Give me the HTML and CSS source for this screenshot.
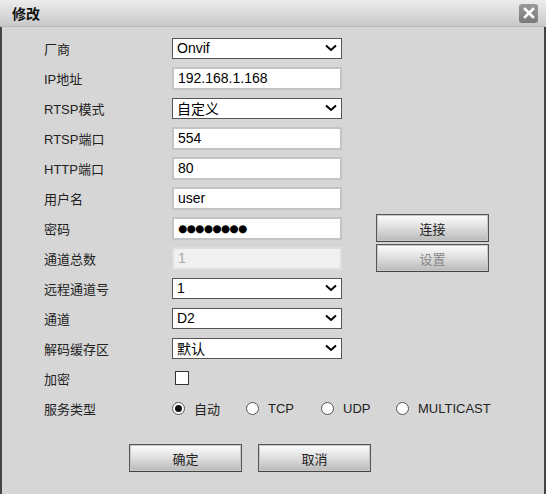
FILE: index.html
```html
<!DOCTYPE html>
<html lang="zh-CN">
<head>
<meta charset="utf-8">
<title>修改</title>
<link rel="stylesheet" href="styles.css">
</head>
<body>
<div class="dialog">
  <div class="titlebar">
    <span class="title">修改</span>
    <span class="close"><svg width="12" height="12" viewBox="0 0 12 12"><path d="M2 2 L10 10 M10 2 L2 10" stroke="#fff" stroke-width="2.6" stroke-linecap="square"/></svg></span>
  </div>
  <div class="body">
    <div class="form">
      <div class="label">厂商</div>
      <div class="select"><span>Onvif</span><svg class="chev" width="12" height="8" viewBox="0 0 12 8"><path d="M1 1.5 L6 6 L11 1.5" fill="none" stroke="#000" stroke-width="2"/></svg></div>
      <div class="side"></div>

      <div class="label">IP地址</div>
      <div class="input">192.168.1.168</div>
      <div class="side"></div>

      <div class="label">RTSP模式</div>
      <div class="select"><span>自定义</span><svg class="chev" width="12" height="8" viewBox="0 0 12 8"><path d="M1 1.5 L6 6 L11 1.5" fill="none" stroke="#000" stroke-width="2"/></svg></div>
      <div class="side"></div>

      <div class="label">RTSP端口</div>
      <div class="input">554</div>
      <div class="side"></div>

      <div class="label">HTTP端口</div>
      <div class="input">80</div>
      <div class="side"></div>

      <div class="label">用户名</div>
      <div class="input">user</div>
      <div class="side"></div>

      <div class="label">密码</div>
      <div class="input pwd">●●●●●●●●</div>
      <div class="side"><div class="btn side-btn">连接</div></div>

      <div class="label">通道总数</div>
      <div class="input disabled">1</div>
      <div class="side"><div class="btn side-btn dim">设置</div></div>

      <div class="label">远程通道号</div>
      <div class="select"><span>1</span><svg class="chev" width="12" height="8" viewBox="0 0 12 8"><path d="M1 1.5 L6 6 L11 1.5" fill="none" stroke="#000" stroke-width="2"/></svg></div>
      <div class="side"></div>

      <div class="label">通道</div>
      <div class="select"><span>D2</span><svg class="chev" width="12" height="8" viewBox="0 0 12 8"><path d="M1 1.5 L6 6 L11 1.5" fill="none" stroke="#000" stroke-width="2"/></svg></div>
      <div class="side"></div>

      <div class="label">解码缓存区</div>
      <div class="select"><span>默认</span><svg class="chev" width="12" height="8" viewBox="0 0 12 8"><path d="M1 1.5 L6 6 L11 1.5" fill="none" stroke="#000" stroke-width="2"/></svg></div>
      <div class="side"></div>

      <div class="label">加密</div>
      <div class="check-cell"><span class="checkbox"></span></div>
      <div class="side"></div>

      <div class="label">服务类型</div>
      <div class="radios">
        <span class="radio-item"><span class="radio on"></span>自动</span>
        <span class="radio-item"><span class="radio"></span>TCP</span>
        <span class="radio-item"><span class="radio"></span>UDP</span>
        <span class="radio-item"><span class="radio"></span>MULTICAST</span>
      </div>
    </div>
    <div class="actions">
      <div class="btn big">确定</div>
      <div class="btn big">取消</div>
    </div>
  </div>
</div>
</body>
</html>
```
FILE: styles.css
```css
* { box-sizing: border-box; }
html, body { margin: 0; padding: 0; }
body {
  width: 546px;
  height: 494px;
  overflow: hidden;
  background: #d6d6d6;
  font-family: "Liberation Sans", Arial, "Noto Sans CJK SC", sans-serif;
  color: #222;
}
.dialog {
  width: 546px;
  height: 494px;
  display: flex;
  flex-direction: column;
}
.titlebar {
  height: 27px;
  flex: none;
  display: flex;
  align-items: center;
  justify-content: space-between;
  padding: 0 8px 0 12px;
  background: linear-gradient(#ededed, #c9c9c9);
  border-bottom: 1px solid #b8b8b8;
}
.title {
  font-size: 14px;
  font-weight: bold;
  color: #111;
}
.close {
  width: 19px;
  height: 19px;
  border-radius: 3px;
  background: linear-gradient(#9a9a9a, #7a7a7a);
  display: flex;
  align-items: center;
  justify-content: center;
}
.body {
  flex: 1;
  border-left: 2px solid #444;
  border-right: 2px solid #444;
  background: #d6d6d6;
  padding: 6px 0 0 42px;
}
.form {
  display: grid;
  grid-template-columns: 128px 170px 113px;
  grid-auto-rows: 30px;
  align-items: center;
}
.form .side { padding-left: 34px; }
.radios { grid-column: 2 / 4; }
.label {
  font-size: 13px;
  color: #222;
}
.select {
  height: 21px;
  border: 1px solid #555;
  background: #fff;
  display: flex;
  align-items: center;
  justify-content: space-between;
  padding: 0 4px;
  font-size: 14px;
  color: #000;
}
.input {
  height: 23px;
  border: 2px solid #c4c4c4;
  background: #fff;
  display: flex;
  align-items: center;
  padding: 0 4px;
  font-size: 14px;
  color: #000;
}
.input.pwd {
  font-size: 10.5px;
  letter-spacing: -0.6px;
  font-family: "DejaVu Sans", sans-serif;
}
.input.disabled {
  background: #f0f0f0;
  border-color: #dedede;
  color: #a8a8a8;
}
.check-cell { padding-left: 3px; display: flex; }
.checkbox {
  width: 14px;
  height: 14px;
  border: 1px solid #333;
  background: #fff;
}
.radios {
  display: grid;
  grid-template-columns: 74px 75px 75px auto;
  font-size: 13px;
  color: #222;
}
.radio-item {
  display: flex;
  align-items: center;
  gap: 9px;
}
.radio {
  width: 13px;
  height: 13px;
  border-radius: 50%;
  border: 1px solid #555;
  background: #fff;
  display: flex;
  align-items: center;
  justify-content: center;
}
.radio.on::after {
  content: "";
  width: 7px;
  height: 7px;
  border-radius: 50%;
  background: #111;
}
.btn {
  border: 1px solid #555;
  border-bottom-color: #444;
  background: linear-gradient(#fdfdfd, #e4e4e4 40%, #b9b9b9);
  display: flex;
  align-items: center;
  justify-content: center;
  font-size: 13px;
  color: #222;
  box-shadow: inset 0 0 0 1px #c8c8c8;
}
.side-btn {
  width: 113px;
  height: 28px;
}
.btn.dim { color: #888; }
.actions {
  display: flex;
  gap: 16px;
  padding: 21px 0 0 85px;
}
.btn.big {
  width: 113px;
  height: 28px;
}
```
